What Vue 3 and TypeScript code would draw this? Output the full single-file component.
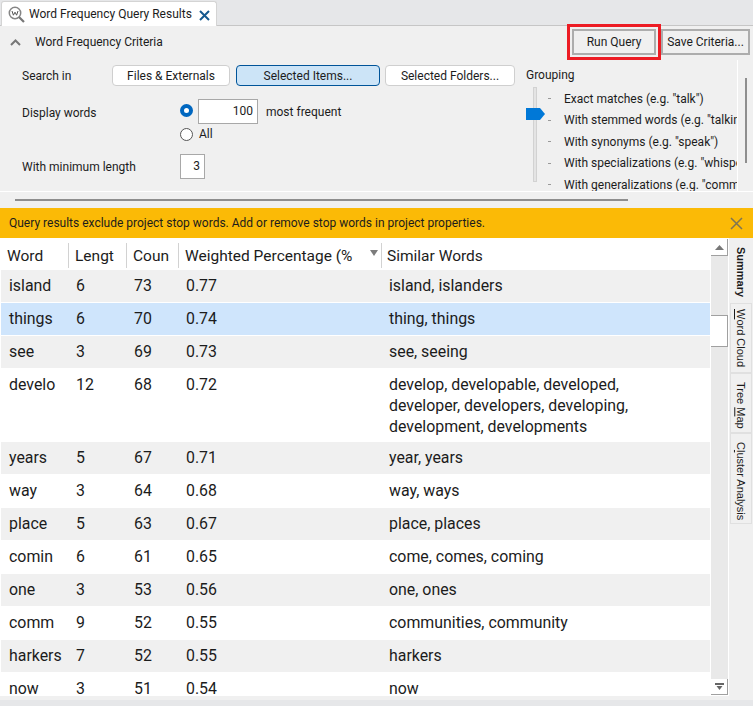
<template>
  <div class="app">
    <div class="tabbar">
      <div class="doc-tab">
        <svg class="doc-icon" width="17" height="17" viewBox="0 0 17 17" aria-hidden="true">
          <circle cx="7" cy="7" r="5.7" fill="#fff" stroke="#858585" stroke-width="1.5" />
          <path d="M11 11l5 5" stroke="#777" stroke-width="2.2" />
          <path d="M4 5l1.4 4.2L7 6.2l1.6 3L10 5" fill="none" stroke="#555" stroke-width="1" />
        </svg>
        <span class="doc-title">Word Frequency Query Results</span>
        <svg class="doc-close" width="11" height="11" viewBox="0 0 11 11" aria-hidden="true">
          <path d="M1 1l9 9M10 1l-9 9" stroke="#14598f" stroke-width="2" />
        </svg>
      </div>
    </div>

    <section class="criteria">
      <div class="criteria-head">
        <svg class="chevron" width="11" height="7" viewBox="0 0 11 7" aria-hidden="true">
          <path d="M1 6l4.5-4.5L10 6" fill="none" stroke="#777" stroke-width="2" />
        </svg>
        <span class="criteria-title">Word Frequency Criteria</span>
        <button class="flat-btn run-btn">Run Query</button>
        <button class="flat-btn save-btn">Save Criteria...</button>
      </div>

      <div class="criteria-body">
        <div class="form">
          <div class="search-row">
            <span class="search-label">Search in</span>
            <button class="scope-btn scope-files">Files &amp; Externals</button>
            <button class="scope-btn scope-items active">Selected Items...</button>
            <button class="scope-btn scope-folders">Selected Folders...</button>
          </div>
          <div class="display-row">
            <span class="form-label display-label">Display words</span>
            <div class="display-opts">
              <div class="opt-line">
                <span class="radio on"></span>
                <span class="num-box num-wide">100</span>
                <span class="opt-text">most frequent</span>
              </div>
              <div class="opt-line opt-all">
                <span class="radio"></span>
                <span class="all-text">All</span>
              </div>
            </div>
          </div>
          <div class="length-row">
            <span class="form-label">With minimum length</span>
            <span class="num-box num-small">3</span>
          </div>
        </div>

        <div class="grouping">
          <div class="grouping-title">Grouping</div>
          <div class="grouping-list">
            <div class="slider">
              <span class="slider-track"></span>
              <svg class="slider-thumb" width="20" height="12" viewBox="0 0 20 12" aria-hidden="true">
                <path d="M0 0h14l5 6-5 6H0z" fill="#0078d7" />
              </svg>
            </div>
            <ul class="levels">
              <li v-for="level in levels" :key="level" class="level">
                <span class="tick"></span>
                <span class="level-text">{{ level }}</span>
              </li>
            </ul>
          </div>
        </div>

        <div class="panel-scroll"><span class="panel-thumb"></span></div>
      </div>

      <div class="h-scroll"><span class="h-thumb"></span></div>
    </section>

    <div class="notice">
      <span>Query results exclude project stop words. Add or remove stop words in project properties.</span>
      <svg width="13" height="13" viewBox="0 0 13 13" aria-hidden="true">
        <path d="M1 1l11 11M12 1L1 12" stroke="#7d7455" stroke-width="1.5" />
      </svg>
    </div>

    <div class="results">
      <div class="grid-wrap">
        <div class="grid-head">
          <div v-for="col in columns" :key="col" class="head-cell">{{ col }}</div>
          <span class="sort-arrow"></span>
        </div>
        <div
          v-for="row in rows"
          :key="row.word"
          class="grid-row"
          :class="row.tone"
        >
          <div class="cell">{{ row.word }}</div>
          <div class="cell cell-num">{{ row.length }}</div>
          <div class="cell cell-num">{{ row.count }}</div>
          <div class="cell cell-num">{{ row.pct }}</div>
          <div class="cell similar">{{ row.similar }}</div>
        </div>
      </div>

      <div class="v-scroll">
        <div class="v-btn v-btn-up">
          <svg width="9" height="5" viewBox="0 0 9 5" aria-hidden="true"><path d="M4.5 0L9 5H0z" fill="#777" /></svg>
        </div>
        <div class="v-gap"></div>
        <div class="v-thumb"></div>
        <div class="v-track"></div>
        <div class="v-btn v-btn-down">
          <svg width="9" height="7" viewBox="0 0 9 7" aria-hidden="true">
            <path d="M0 0h9v2H0zM1.5 3h6L4.5 7z" fill="#666" />
          </svg>
        </div>
      </div>

      <div class="side-tabs">
        <div class="side-tab side-summary"><span>Summary</span></div>
        <div class="side-tab side-cloud"><span><u>W</u>ord Cloud</span></div>
        <div class="side-tab side-tree"><span>Tree <u>M</u>ap</span></div>
        <div class="side-tab side-cluster"><span>C<u>l</u>uster Analysis</span></div>
      </div>
    </div>

    <div class="statusbar"></div>
  </div>
</template>

<script setup lang="ts">
interface WordRow {
  word: string
  length: number
  count: number
  pct: string
  similar: string
  tone: 'plain' | 'alt' | 'selected'
}

const columns = ['Word', 'Lengt', 'Coun', 'Weighted Percentage (%', 'Similar Words']

const levels = [
  'Exact matches (e.g. "talk")',
  'With stemmed words (e.g. "talking")',
  'With synonyms (e.g. "speak")',
  'With specializations (e.g. "whisper")',
  'With generalizations (e.g. "communicate")',
]

const rows: WordRow[] = [
  { word: 'island', length: 6, count: 73, pct: '0.77', similar: 'island, islanders', tone: 'alt' },
  { word: 'things', length: 6, count: 70, pct: '0.74', similar: 'thing, things', tone: 'selected' },
  { word: 'see', length: 3, count: 69, pct: '0.73', similar: 'see, seeing', tone: 'alt' },
  {
    word: 'develo',
    length: 12,
    count: 68,
    pct: '0.72',
    similar: 'develop, developable, developed, developer, developers, developing, development, developments',
    tone: 'plain',
  },
  { word: 'years', length: 5, count: 67, pct: '0.71', similar: 'year, years', tone: 'alt' },
  { word: 'way', length: 3, count: 64, pct: '0.68', similar: 'way, ways', tone: 'plain' },
  { word: 'place', length: 5, count: 63, pct: '0.67', similar: 'place, places', tone: 'alt' },
  { word: 'comin', length: 6, count: 61, pct: '0.65', similar: 'come, comes, coming', tone: 'plain' },
  { word: 'one', length: 3, count: 53, pct: '0.56', similar: 'one, ones', tone: 'alt' },
  { word: 'comm', length: 9, count: 52, pct: '0.55', similar: 'communities, community', tone: 'plain' },
  { word: 'harkers', length: 7, count: 52, pct: '0.55', similar: 'harkers', tone: 'alt' },
  { word: 'now', length: 3, count: 51, pct: '0.54', similar: 'now', tone: 'plain' },
]
</script>

<style>
html,
body {
  margin: 0;
  background: #f0f0f0;
}
</style>

<style scoped>
.app {
  width: 753px;
  height: 706px;
  display: flex;
  flex-direction: column;
  overflow: hidden;
  background: #f0f0f0;
  color: #1c1c1c;
  font-family: Roboto, "Noto Sans", sans-serif;
  font-size: 12px;
}

/* document tab strip */
.tabbar {
  height: 26px;
  flex: none;
  box-sizing: border-box;
  padding: 1px 0 0 1px;
  background: #e6e7e9;
  border-bottom: 1px solid #c6c6c6;
}

.doc-tab {
  width: 216px;
  height: 25px;
  box-sizing: border-box;
  display: flex;
  align-items: center;
  padding: 0 0 0 6px;
  background: #fff;
  border: 1px solid #d4d4d4;
  border-bottom: none;
  border-radius: 3px 3px 0 0;
}

.doc-icon {
  flex: none;
}

.doc-title {
  margin-left: 4px;
  width: 165px;
  flex: none;
  white-space: nowrap;
}

.doc-close {
  flex: none;
  margin: 3px 0 0 5px;
}

/* criteria */
.criteria {
  height: 182px;
  flex: none;
  display: flex;
  flex-direction: column;
}

.criteria-head {
  height: 34px;
  flex: none;
  box-sizing: border-box;
  display: flex;
  align-items: center;
  padding: 0 3px 2px 10px;
}

.criteria-title {
  margin-left: 14px;
  flex: 1;
}

.flat-btn {
  height: 26px;
  padding: 0;
  box-sizing: border-box;
  background: #f0f0f0;
  border: 2px solid #adadad;
  font: inherit;
  color: inherit;
}

.run-btn {
  width: 84px;
  outline: 3px solid #ed1c24;
  outline-offset: 2px;
}

.save-btn {
  width: 89px;
  margin-left: 5px;
}

.criteria-body {
  height: 131px;
  flex: none;
  display: flex;
  overflow: hidden;
  border-bottom: 1px solid #fff;
}

.form {
  width: 526px;
  flex: none;
  box-sizing: border-box;
  padding: 5px 0 0 22px;
}

.search-row {
  display: flex;
  align-items: center;
  height: 21px;
}

.search-label {
  width: 90px;
  flex: none;
}

.scope-btn {
  height: 21px;
  padding: 0;
  box-sizing: border-box;
  background: #fff;
  border: 1px solid #cfcfcf;
  border-radius: 4px;
  font: inherit;
  color: inherit;
}

.scope-files {
  width: 118px;
}

.scope-items {
  width: 144px;
  margin-left: 6px;
}

.scope-folders {
  width: 130px;
  margin-left: 5px;
}

.scope-btn.active {
  background: #cce4f7;
  border-color: #005499;
}

.display-row {
  display: flex;
  margin-top: 13px;
}

.display-label {
  width: 158px;
  flex: none;
  margin-top: 5px;
}

.form-label {
  line-height: 18px;
}

.opt-line {
  display: flex;
  align-items: center;
}

.opt-all {
  margin-top: 3px;
}

.radio {
  width: 13px;
  height: 13px;
  box-sizing: border-box;
  flex: none;
  border: 1px solid #555;
  border-radius: 50%;
  background: #fff;
}

.radio.on {
  border: 4px solid #0067c0;
  background: #fff;
  margin-top: -3px;
}

.num-box {
  display: block;
  box-sizing: border-box;
  height: 25px;
  padding-right: 4px;
  background: #fff;
  border: 1px solid #a8a8a8;
  text-align: right;
  line-height: 23px;
}

.num-wide {
  width: 60px;
  margin-left: 5px;
}

.opt-text {
  margin-left: 8px;
}

.all-text {
  margin-left: 6px;
}

.length-row {
  display: flex;
  align-items: center;
  margin-top: 13px;
}

.length-row .form-label {
  width: 158px;
  flex: none;
}

.num-small {
  width: 25px;
}

.grouping {
  width: 211px;
  flex: none;
  overflow: hidden;
  border-right: 1px solid #fff;
}

.grouping-title {
  height: 18px;
  margin-top: 6px;
  line-height: 18px;
}

.grouping-list {
  display: flex;
  margin-top: 3px;
}

.slider {
  position: relative;
  width: 22px;
  flex: none;
}

.slider-track {
  display: block;
  width: 4px;
  height: 95px;
  margin: 0 0 0 7px;
  box-sizing: border-box;
  background: #e4e4e4;
  border: 1px solid #d2d2d2;
}

.slider-thumb {
  position: absolute;
  left: 0;
  top: 21px;
}

.levels {
  list-style: none;
  margin: 0;
  padding: 1px 0 0;
  white-space: nowrap;
}

.level {
  height: 21.5px;
  display: flex;
  align-items: center;
}

.tick {
  width: 3px;
  height: 1px;
  margin-right: 13px;
  background: #999;
}

.panel-scroll {
  flex: 1;
  padding: 18px 0 0 7px;
}

.panel-thumb {
  display: block;
  width: 2px;
  height: 85px;
  background: #8e8e8e;
}

.h-scroll {
  height: 16px;
  flex: none;
  box-sizing: border-box;
  padding: 7px 0 0 15px;
}

.h-thumb {
  display: block;
  width: 613px;
  height: 2px;
  background: #8e8e8e;
}

/* stop words notice */
.notice {
  height: 30px;
  flex: none;
  box-sizing: border-box;
  display: flex;
  align-items: center;
  justify-content: space-between;
  padding: 0 10px 0 9px;
  background: #fbba06;
}

/* results grid */
.results {
  flex: 1;
  min-height: 0;
  display: flex;
  overflow: hidden;
}

.grid-wrap {
  width: 711px;
  flex: none;
  box-sizing: border-box;
  padding: 1px 1px 0 1px;
  overflow: hidden;
  background: #fff;
  font-size: 15.9px;
}

.grid-head,
.grid-row {
  display: grid;
  grid-template-columns: 68px 58px 52px 203px 1fr;
}

.grid-head {
  position: relative;
  height: 31px;
  font-size: 15.5px;
}

.head-cell {
  display: flex;
  align-items: center;
  padding-left: 6px;
  border-right: 1px solid #d2d2d2;
  margin: 4px 0 2px;
  white-space: nowrap;
  overflow: hidden;
}

.head-cell:last-of-type {
  border-right: none;
  padding-left: 5px;
}

.sort-arrow {
  position: absolute;
  left: 369px;
  top: 11px;
  border: 4.5px solid transparent;
  border-top: 6px solid #7c7c7c;
  border-bottom: none;
}

.grid-row {
  border-bottom: 1px solid #fff;
}

.grid-row.alt {
  background: #f0f0f0;
}

.grid-row.selected {
  background: #cfe5fc;
}

.cell {
  padding: 5px 0 6px 8px;
  line-height: 21px;
  overflow: hidden;
  white-space: nowrap;
}

.cell-num {
  padding-left: 7px;
}

.cell.similar {
  white-space: normal;
  padding: 5px 40px 4px 7px;
}

.v-scroll {
  width: 17px;
  flex: none;
  box-sizing: border-box;
  display: flex;
  flex-direction: column;
  padding: 1px 0;
  background: #fff;
}

.v-btn {
  flex: none;
  box-sizing: border-box;
  display: flex;
  align-items: center;
  justify-content: center;
  background: #fff;
  border-right: 1px solid #a0a0a0;
  border-bottom: 1px solid #a0a0a0;
}

.v-btn-up {
  height: 17px;
}

.v-btn-down {
  height: 16px;
}

.v-gap {
  height: 59px;
  flex: none;
  background: #e9e9e9;
}

.v-thumb {
  height: 32px;
  flex: none;
  box-sizing: border-box;
  background: #fff;
  border: 1px solid #a0a0a0;
  border-left: none;
}

.v-track {
  flex: 1;
  background: #e9e9e9;
}

.side-tabs {
  flex: 1;
  display: flex;
  flex-direction: column;
  align-items: flex-end;
  padding-top: 1px;
  border-left: 1px solid #fff;
  font-family: "Liberation Sans", Arial, sans-serif;
  font-size: 11px;
}

.side-tab {
  width: 22px;
  box-sizing: border-box;
  writing-mode: vertical-rl;
  display: flex;
  align-items: center;
  padding-right: 0;
  white-space: nowrap;
  line-height: 20px;
  margin-right: 1px;
  border: 1px solid #e0e0e0;
}

.side-summary {
  height: 64px;
  padding-top: 7px;
  font-weight: 700;
  border-color: transparent;
}

.side-cloud {
  height: 70px;
  padding-top: 5px;
}

.side-tree {
  height: 60px;
  padding-top: 8px;
}

.side-cluster {
  height: 91px;
  padding-top: 8px;
}

.statusbar {
  height: 10px;
  flex: none;
  box-sizing: border-box;
  border-top: 4px solid #f0f0f0;
  background: #e6e7e9;
}
</style>
